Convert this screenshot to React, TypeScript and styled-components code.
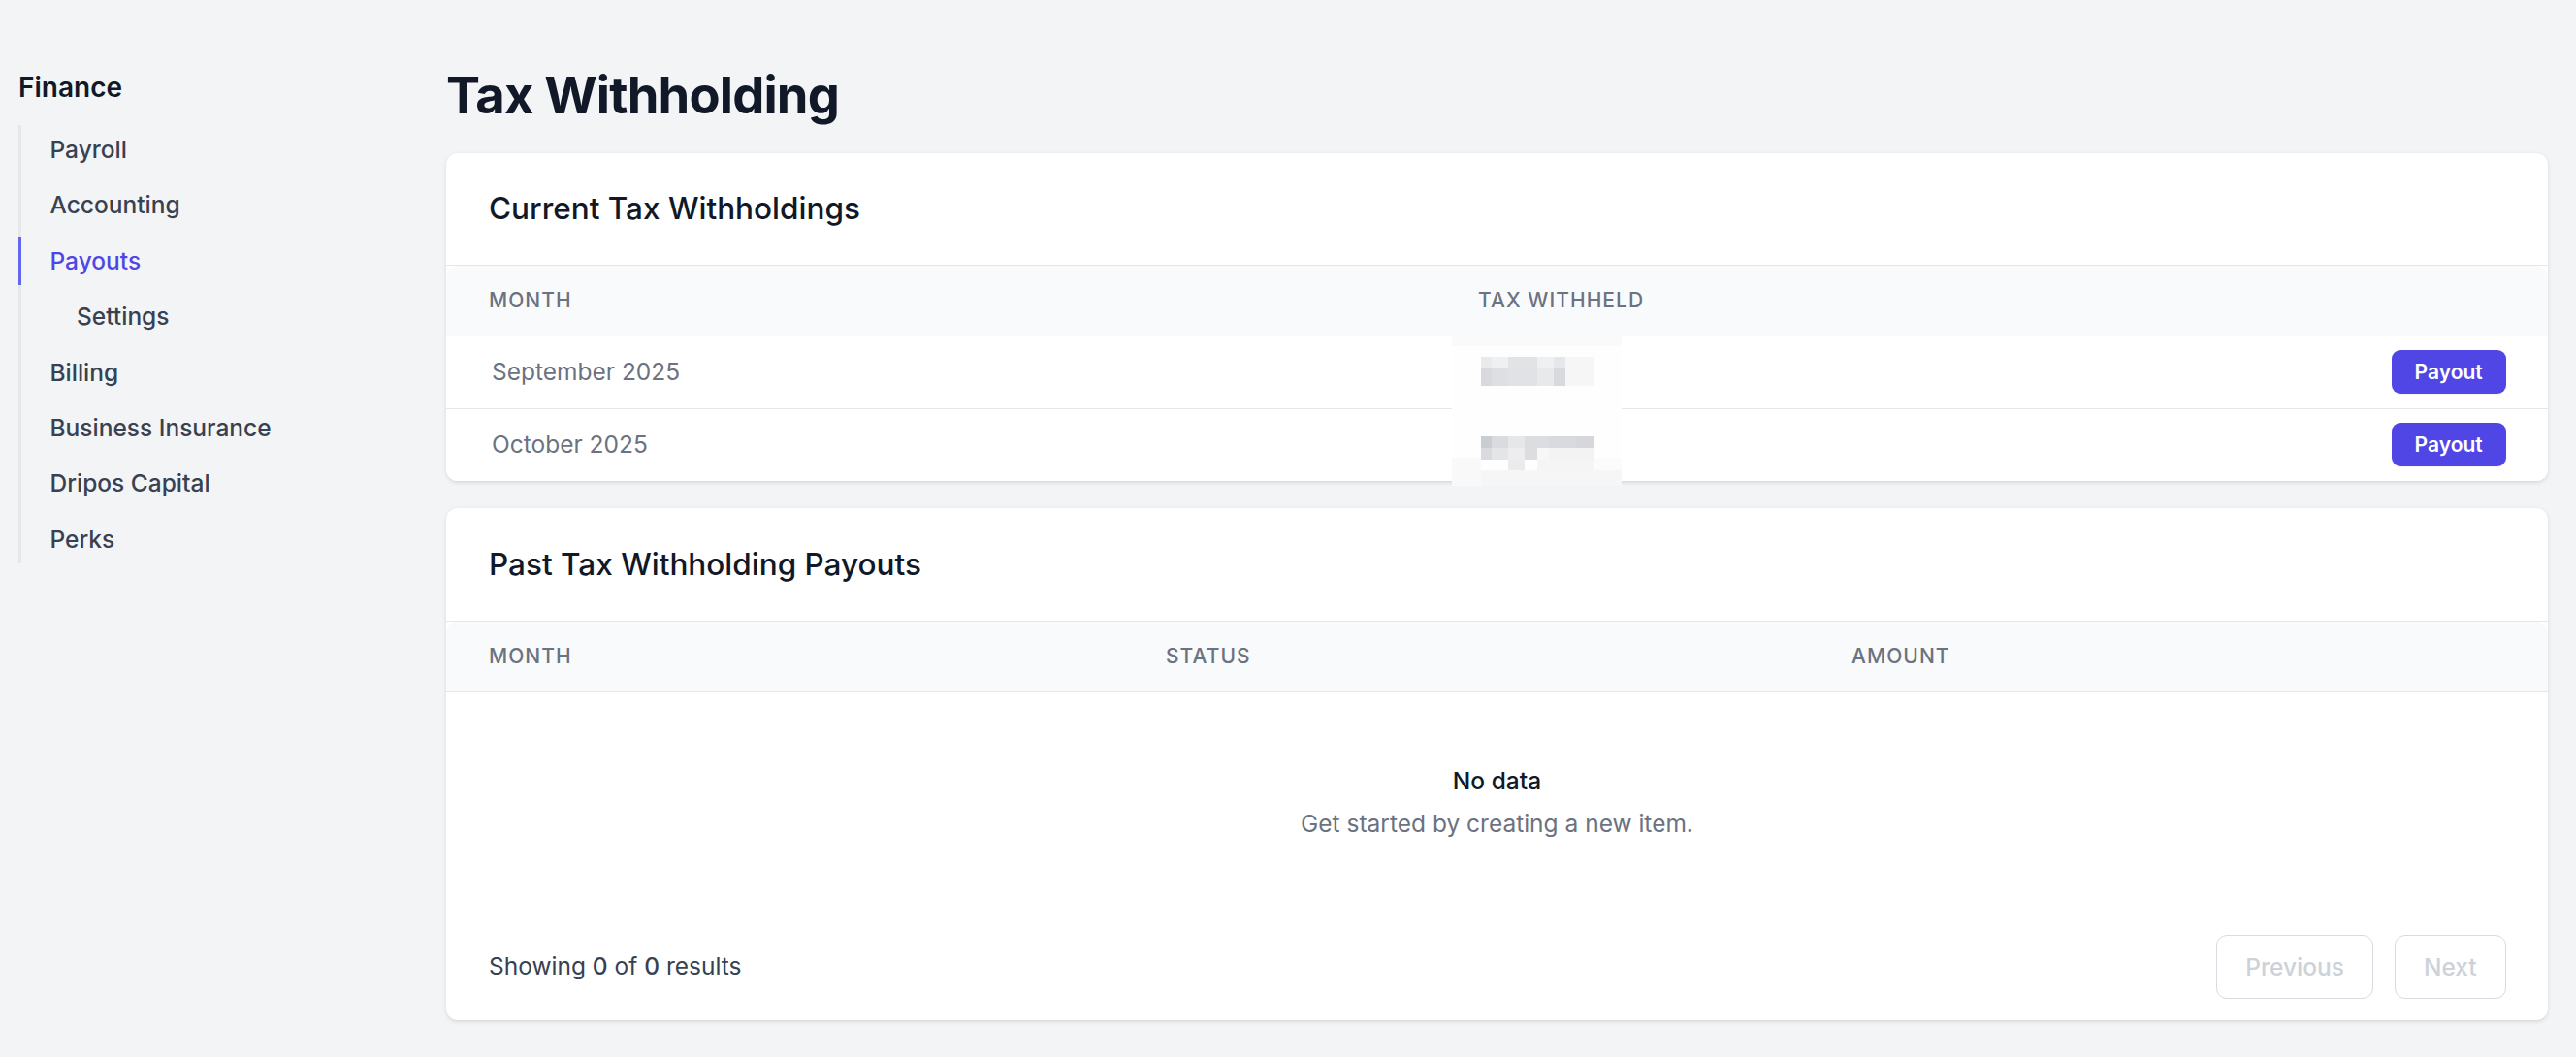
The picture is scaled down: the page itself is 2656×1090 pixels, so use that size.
import React from "react";
import styled, { createGlobalStyle } from "styled-components";

const GlobalStyle = createGlobalStyle`
  * { box-sizing: border-box; }
  html, body { margin: 0; padding: 0; }
  body {
    background: #f3f4f6;
    font-family: Inter, "Noto Sans", "Liberation Sans", sans-serif;
    color: #111827;
    -webkit-font-smoothing: antialiased;
  }
`;

const Layout = styled.div`
  display: flex;
  min-height: 1090px;
`;

const Sidebar = styled.aside`
  flex: 0 0 460px;
  padding: 69px 0 0 19px;
`;

const SectionTitle = styled.h2`
  margin: 0 0 18px;
  font-size: 28px;
  line-height: 42px;
  font-weight: 600;
  color: #111827;
`;

const NavList = styled.nav`
  display: flex;
  flex-direction: column;
  gap: 7.4px;
  border-left: 3px solid #e5e7eb;
  width: 380px;
`;

const NavItem = styled.a<{ $active?: boolean; $sub?: boolean }>`
  display: flex;
  align-items: center;
  height: 50px;
  margin-left: -3px;
  padding-left: ${(p) => (p.$sub ? "57px" : "29.5px")};
  border-left: 3px solid ${(p) => (p.$active ? "#6366f1" : "transparent")};
  font-size: 24.5px;
  font-weight: 500;
  color: ${(p) => (p.$active ? "#4f46e5" : "#374151")};
  text-decoration: none;
  cursor: pointer;
`;

const Main = styled.main`
  flex: 1;
  padding: 66.5px 29px 0 0;
  display: flex;
  flex-direction: column;
`;

const PageTitle = styled.h1`
  margin: 0 0 28px;
  font-size: 52.5px;
  line-height: 63px;
  font-weight: 700;
  letter-spacing: -0.016em;
  color: #111827;
`;

const Stack = styled.div`
  display: flex;
  flex-direction: column;
  gap: 28.5px;
`;

const Card = styled.section`
  position: relative;
  background: #ffffff;
  border-radius: 12px;
  box-shadow: 0 1.5px 4px rgba(0, 0, 0, 0.1), 0 1px 2px -1px rgba(0, 0, 0, 0.08);
`;

const CardHeader = styled.div<{ $h: number }>`
  height: ${(p) => p.$h}px;
  display: flex;
  align-items: center;
  padding: 0 44px;
  border-bottom: 1px solid #e5e7eb;
`;

const CardTitle = styled.h3`
  margin: 0;
  font-size: 31.5px;
  line-height: 42px;
  font-weight: 500;
  color: #111827;
`;

const Row = styled.div<{ $cols: string; $head?: boolean; $last?: boolean }>`
  display: grid;
  grid-template-columns: ${(p) => p.$cols};
  align-items: center;
  height: ${(p) => (p.$head ? "73px" : p.$last ? "74px" : "75px")};
  padding: 0 43.3px 0 44px;
  background: ${(p) => (p.$head ? "#f9fafb" : "#ffffff")};
  border-bottom: ${(p) => (p.$last ? "none" : "1px solid #e5e7eb")};
  border-radius: ${(p) => (p.$head ? "12px 12px 0 0" : p.$last ? "0 0 12px 12px" : "0")};
`;

const HeadCell = styled.div`
  font-size: 21px;
  line-height: 30px;
  font-weight: 500;
  letter-spacing: 0.05em;
  text-transform: uppercase;
  color: #6b7280;
`;

const Cell = styled.div<{ $indent?: boolean; $right?: boolean }>`
  font-size: 24.5px;
  line-height: 35px;
  color: #6b7280;
  padding-left: ${(p) => (p.$indent ? "3px" : "0")};
  display: flex;
  justify-content: ${(p) => (p.$right ? "flex-end" : "flex-start")};
`;

const PrimaryButton = styled.button`
  height: 44.6px;
  padding: 0 24px;
  border: none;
  border-radius: 9px;
  background: #4f46e5;
  color: #ffffff;
  font-family: inherit;
  font-size: 21px;
  font-weight: 600;
  box-shadow: 0 1px 2px rgba(0, 0, 0, 0.05);
  cursor: pointer;
`;

const Redacted = styled.svg`
  position: absolute;
  left: 1036.5px;
  top: 189px;
  width: 175px;
  height: 154px;
  display: block;
`;

const EmptyState = styled.div`
  height: 226.5px;
  display: flex;
  flex-direction: column;
  align-items: center;
  justify-content: center;
  text-align: center;
`;

const EmptyTitle = styled.div`
  font-size: 24.5px;
  line-height: 35px;
  font-weight: 500;
  color: #111827;
`;

const EmptyText = styled.div`
  margin-top: 9px;
  font-size: 24.5px;
  line-height: 35px;
  color: #6b7280;
`;

const Footer = styled.div`
  height: 111px;
  display: flex;
  align-items: center;
  justify-content: space-between;
  padding: 0 43.3px 0 44px;
  border-top: 1px solid #e5e7eb;
`;

const Summary = styled.p`
  margin: 0;
  font-size: 24.5px;
  line-height: 35px;
  color: #374151;

  strong {
    font-weight: 500;
  }
`;

const Pager = styled.div`
  display: flex;
  gap: 22px;
`;

const PagerButton = styled.button`
  height: 66px;
  padding: 0 29px;
  border: 1.5px solid #d8dbe1;
  border-radius: 11px;
  background: #ffffff;
  color: #cdd1d8;
  font-family: inherit;
  font-size: 24.5px;
  font-weight: 500;
  cursor: not-allowed;
`;

type Block = [number, number, number, number, string];

const blocks: Block[] = [
  [0, 0, 175, 10, "#fafafa"],
  [0, 125, 30, 29, "#f9f9f9"],
  [30, 138, 145, 16, "#f6f6f6"],
  [147, 125, 28, 13, "#fbfbfb"],
  // row 1
  [30, 21, 11, 11, "#e9eaec"],
  [41, 21, 17, 11, "#eff0f1"],
  [58, 21, 30, 11, "#e2e3e5"],
  [88, 21, 17, 11, "#eff0f1"],
  [105, 21, 12, 11, "#e6e7ea"],
  [117, 21, 30, 30, "#f6f6f7"],
  [30, 32, 11, 19, "#d8d9dd"],
  [41, 32, 17, 19, "#dedfe2"],
  [58, 32, 30, 19, "#e1e2e5"],
  [88, 32, 17, 19, "#e8e9eb"],
  [105, 32, 12, 19, "#d8d9dc"],
  // row 2
  [30, 103, 11, 12, "#c9ccd0"],
  [41, 103, 17, 12, "#dadbde"],
  [58, 103, 17, 12, "#e6e7e9"],
  [75, 103, 13, 12, "#dcdde0"],
  [88, 103, 12, 12, "#dcdde1"],
  [100, 103, 28, 12, "#d9dadd"],
  [128, 103, 19, 12, "#d6d7da"],
  [30, 115, 11, 12, "#d9dadd"],
  [41, 115, 17, 12, "#e4e5e7"],
  [58, 115, 17, 12, "#ededef"],
  [75, 115, 13, 12, "#dcdde0"],
  [88, 115, 12, 12, "#f7f7f7"],
  [100, 115, 47, 12, "#f3f3f4"],
  [58, 127, 17, 11, "#ebebec"],
  [88, 127, 59, 11, "#f5f5f5"],
];

const navItems = [
  { label: "Payroll" },
  { label: "Accounting" },
  { label: "Payouts", active: true },
  { label: "Settings", sub: true },
  { label: "Billing" },
  { label: "Business Insurance" },
  { label: "Dripos Capital" },
  { label: "Perks" },
];

const currentRows = ["September 2025", "October 2025"];

export default function App() {
  const cols1 = "1020px 1fr auto";
  const cols2 = "698px 707px 1fr";
  return (
    <>
      <GlobalStyle />
      <Layout>
        <Sidebar>
          <SectionTitle>Finance</SectionTitle>
          <NavList>
            {navItems.map((n) => (
              <NavItem key={n.label} $active={n.active} $sub={n.sub}>
                {n.label}
              </NavItem>
            ))}
          </NavList>
        </Sidebar>
        <Main>
          <PageTitle>Tax Withholding</PageTitle>
          <Stack>
            <Card>
              <CardHeader $h={116}>
                <CardTitle>Current Tax Withholdings</CardTitle>
              </CardHeader>
              <Row $cols={cols1} $head>
                <HeadCell>Month</HeadCell>
                <HeadCell>Tax Withheld</HeadCell>
                <div />
              </Row>
              {currentRows.map((m, i) => (
                <Row key={m} $cols={cols1} $last={i === currentRows.length - 1}>
                  <Cell $indent>{m}</Cell>
                  <Cell />
                  <Cell $right>
                    <PrimaryButton>Payout</PrimaryButton>
                  </Cell>
                </Row>
              ))}
              <Redacted viewBox="0 0 175 154" aria-hidden="true">
                <rect x="0" y="0" width="175" height="154" fill="#fefefe" />
                {blocks.map(([x, y, w, h, c], i) => (
                  <rect key={i} x={x} y={y} width={w} height={h} fill={c} />
                ))}
              </Redacted>
            </Card>
            <Card>
              <CardHeader $h={117}>
                <CardTitle>Past Tax Withholding Payouts</CardTitle>
              </CardHeader>
              <Row $cols={cols2} $head>
                <HeadCell>Month</HeadCell>
                <HeadCell>Status</HeadCell>
                <HeadCell>Amount</HeadCell>
              </Row>
              <EmptyState>
                <EmptyTitle>No data</EmptyTitle>
                <EmptyText>Get started by creating a new item.</EmptyText>
              </EmptyState>
              <Footer>
                <Summary>
                  Showing <strong>0</strong> of <strong>0</strong> results
                </Summary>
                <Pager>
                  <PagerButton disabled>Previous</PagerButton>
                  <PagerButton disabled>Next</PagerButton>
                </Pager>
              </Footer>
            </Card>
          </Stack>
        </Main>
      </Layout>
    </>
  );
}
